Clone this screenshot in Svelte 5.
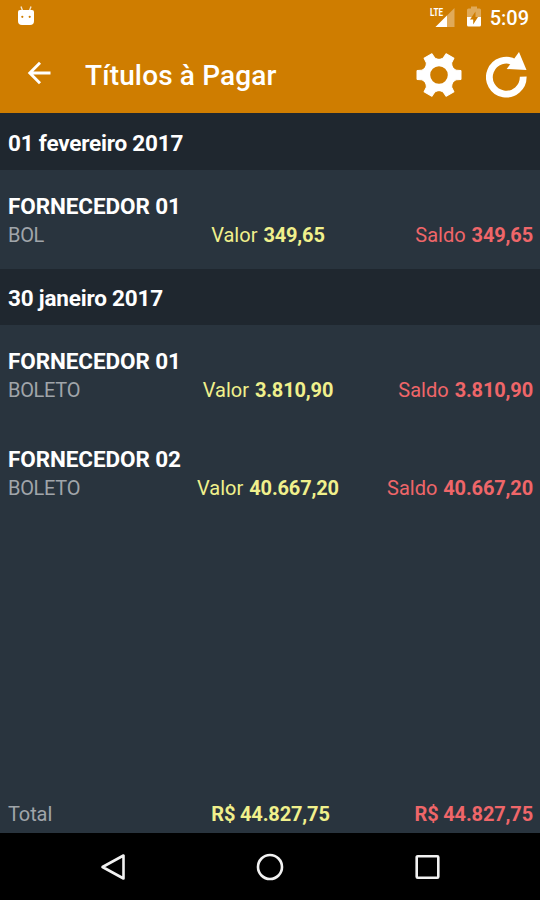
<script lang="ts">
  type Title = { supplier: string; kind: string; amount: string; balance: string };
  type Group = { date: string; titles: Title[] };

  const groups: Group[] = [
    {
      date: "01 fevereiro 2017",
      titles: [{ supplier: "FORNECEDOR 01", kind: "BOL", amount: "349,65", balance: "349,65" }],
    },
    {
      date: "30 janeiro 2017",
      titles: [
        { supplier: "FORNECEDOR 01", kind: "BOLETO", amount: "3.810,90", balance: "3.810,90" },
        { supplier: "FORNECEDOR 02", kind: "BOLETO", amount: "40.667,20", balance: "40.667,20" },
      ],
    },
  ];

  const total = "R$ 44.827,75";
  const teeth = [0, 60, 120, 180, 240, 300];
</script>

<div class="screen">
  <header>
    <div class="status-bar">
      <svg class="robot" width="18" height="20" viewBox="0 0 18 20">
        <path d="M4 0.500l1.800 5M14 0.500l-1.800 5" stroke="#fff" stroke-opacity=".8" stroke-width="1.400" />
        <path d="M1 6q0-2 2-2h12q2 0 2 2v9q0 4-4 4H5q-4 0-4-4z" fill="#fff" />
        <circle cx="5.300" cy="10.800" r="1.100" fill="#cf7d00" />
        <circle cx="12.700" cy="10.800" r="1.100" fill="#cf7d00" />
      </svg>
      <svg class="signal" width="26" height="21" viewBox="0 0 26 21">
        <path d="M25.500 2v19h-19z" fill="#fff" fill-opacity=".35" />
        <path d="M18 9.500v11.500h-11.500z" fill="#fff" />
        <text x="1" y="10" textLength="13" lengthAdjust="spacingAndGlyphs">LTE</text>
      </svg>
      <svg class="battery" width="14" height="21" viewBox="0 0 14 21">
        <path d="M0 11V4q0-1.500 1.500-1.500H4V0.500h6v2h2.500Q14 2.500 14 4v7z" fill="#fff" fill-opacity=".35" />
        <path d="M0 11h14v8q0 1.500-1.500 1.500h-11Q0 20.500 0 19z" fill="#fff" />
        <path d="M8.500 5.500L3 13.500h3.200v5L11 11H8.500z" fill="#cf7d00" />
      </svg>
      <span class="clock">5:09</span>
    </div>

    <div class="toolbar">
      <button class="back" aria-label="Voltar">
        <svg width="24" height="24" viewBox="0 0 24 24">
          <path d="M23.500 12H3M13 1.800L2.800 12L13 22.200" fill="none" stroke="#fff" stroke-width="2.900" />
        </svg>
      </button>
      <h1>Títulos à Pagar</h1>
      <button class="settings" aria-label="Configurações">
        <svg width="46" height="46" viewBox="-23 -23 46 46">
          <g fill="#fff" stroke="#fff" stroke-linejoin="round">
            {#each teeth as angle}
              <path d="M13.500-7.200L17-4.800L22-4.500V4.500L17 4.800L13.500 7.200z" transform="rotate({angle})" />
            {/each}
          </g>
          <circle r="12.500" fill="none" stroke="#fff" stroke-width="7.400" />
        </svg>
      </button>
      <button class="reload" aria-label="Atualizar">
        <svg width="42" height="46" viewBox="0 0 42 46">
          <path d="M37.200 24.700A16.900 16.900 0 1 1 29.500 11" fill="none" stroke="#fff" stroke-width="6.800" />
          <path d="M33 0L40.500 18L20.700 17z" fill="#fff" />
        </svg>
      </button>
    </div>
  </header>

  <main>
    {#each groups as group}
      <h2>{group.date}</h2>
      {#each group.titles as title}
        <div class="title-item">
          <div class="supplier">{title.supplier}</div>
          <div class="columns">
            <span class="kind">{title.kind}</span>
            <span class="amount">Valor <b>{title.amount}</b></span>
            <span class="balance">Saldo <b>{title.balance}</b></span>
          </div>
        </div>
      {/each}
    {/each}
  </main>

  <div class="columns total">
    <span class="kind">Total</span>
    <span class="amount"><b>{total}</b></span>
    <span class="balance"><b>{total}</b></span>
  </div>

  <nav>
    <svg width="26" height="28" viewBox="0 0 26 28">
      <path d="M23.500 2.500v23L2.500 14z" />
    </svg>
    <svg width="28" height="28" viewBox="0 0 28 28">
      <circle cx="14" cy="14" r="12" />
    </svg>
    <svg width="26" height="28" viewBox="0 0 26 28">
      <rect x="2.700" y="3.200" width="21.600" height="21.600" rx="1" />
    </svg>
  </nav>
</div>

<style>
  .screen {
    display: flex;
    flex-direction: column;
    width: 540px;
    height: 900px;
    overflow: hidden;
    background: #29343e;
    color: #fff;
    font-family: Roboto, "Liberation Sans", sans-serif;
  }

  header {
    height: 113px;
    background: #cf7d00;
  }

  .status-bar {
    display: flex;
    align-items: flex-start;
    height: 36px;
    padding: 6px 11px 0 17px;
    box-sizing: border-box;
  }

  .robot {
    margin-right: auto;
  }

  .signal {
    margin-right: 12px;
  }

  .signal text {
    fill: #fff;
    font-size: 11.5px;
    font-weight: 700;
  }

  .battery {
    margin-right: 9px;
  }

  .clock {
    font-size: 20px;
    font-weight: 500;
    line-height: 25px;
  }

  .toolbar {
    display: flex;
    align-items: center;
    height: 77px;
    padding: 0 12px 0 27px;
  }

  button {
    display: flex;
    padding: 0;
    border: 0;
    background: none;
  }

  .back {
    margin: 0 34px 4px 0;
  }

  h1 {
    flex: 1;
    margin: 0;
    padding-top: 3px;
    font-size: 28px;
    font-weight: 500;
    line-height: 32px;
    letter-spacing: 0.15px;
  }

  .settings {
    margin-right: 24px;
  }

  main {
    flex: 1;
  }

  h2 {
    height: 56px;
    margin: 0;
    padding: 0 8px;
    background: #1f272f;
    font-size: 22.5px;
    font-weight: 700;
    line-height: 58px;
    letter-spacing: -0.2px;
  }

  h2:first-child {
    height: 57px;
    line-height: 61px;
  }

  .title-item {
    height: 98.5px;
    padding: 22px 7px 0 8px;
    box-sizing: border-box;
  }

  .supplier {
    font-size: 22.5px;
    font-weight: 700;
    line-height: 28px;
    letter-spacing: -0.1px;
  }

  .columns {
    display: grid;
    grid-template-columns: 1fr auto 1fr;
    font-size: 20px;
    line-height: 31px;
  }

  .columns b {
    letter-spacing: -0.15px;
  }

  .title-item .columns {
    padding-right: 5px;
  }

  .title-item .balance {
    margin-right: -5px;
  }

  .title-item b {
    margin-left: 1px;
  }

  .kind {
    color: #a0a5aa;
    letter-spacing: -0.3px;
  }

  .amount {
    color: #f0f08c;
  }

  .balance {
    color: #ef6669;
    text-align: right;
  }

  .total {
    height: 34px;
    padding: 0 7px 0 8px;
  }

  .total .kind {
    letter-spacing: -0.1px;
  }

  nav {
    display: flex;
    align-items: center;
    justify-content: space-between;
    height: 67px;
    padding: 0 100px;
    box-sizing: border-box;
    background: #000;
  }

  nav svg {
    fill: none;
    stroke: #f2f2f2;
    stroke-width: 2.6;
    stroke-linejoin: round;
  }
</style>
